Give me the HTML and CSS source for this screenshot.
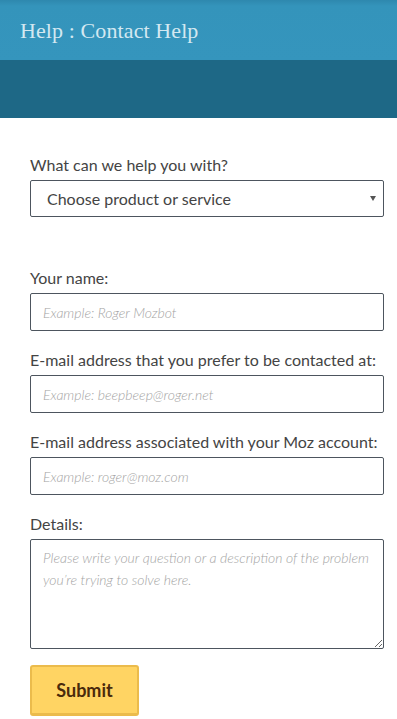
FILE: index.html
```html
<!DOCTYPE html>
<html lang="en">
<head>
<meta charset="utf-8">
<title>Help : Contact Help</title>
<link rel="stylesheet" href="styles.css">
</head>
<body>
<header class="header">
  <div class="header-top"><h1 class="title">Help : Contact Help</h1></div>
  <div class="header-band"></div>
</header>
<main class="content">
  <form class="form">
    <div class="field field-select">
      <label class="label" for="product">What can we help you with?</label>
      <div class="select-wrap">
        <select id="product" class="select">
          <option>Choose product or service</option>
        </select>
      </div>
    </div>
    <div class="field">
      <label class="label" for="name">Your name:</label>
      <input id="name" class="input" type="text" placeholder="Example: Roger Mozbot">
    </div>
    <div class="field">
      <label class="label" for="email">E-mail address that you prefer to be contacted at:</label>
      <input id="email" class="input" type="text" placeholder="Example: beepbeep@roger.net">
    </div>
    <div class="field">
      <label class="label" for="mozemail">E-mail address associated with your Moz account:</label>
      <input id="mozemail" class="input" type="text" placeholder="Example: roger@moz.com">
    </div>
    <div class="field field-last">
      <label class="label" for="details">Details:</label>
      <textarea id="details" class="textarea" placeholder="Please write your question or a description of the problem you’re trying to solve here."></textarea>
    </div>
    <button type="button" class="submit">Submit</button>
  </form>
</main>
</body>
</html>
```
FILE: styles.css
```css
* { box-sizing: border-box; }
html, body { margin: 0; padding: 0; background: #fff; }
body { font-family: Lato, "Open Sans", Arial, sans-serif; color: #444; }

.header-top {
  height: 60px;
  background: linear-gradient(#2e88ae 0, #3494bb 6px, #3595bd 100%);
  display: flex;
  align-items: center;
  padding: 0 20px;
}
.title {
  margin: 0;
  font-family: "Liberation Serif", "DejaVu Serif", serif;
  font-weight: normal;
  font-size: 22px;
  color: #d3e8f1;
  letter-spacing: 0.1px;
  position: relative;
  top: 1px;
}
.header-band { height: 58px; background: #1e6886; }

.content { padding: 36px 13px 0 30px; }
.form { display: flex; flex-direction: column; }

.field { display: flex; flex-direction: column; margin-bottom: 18px; }
.field-select { margin-bottom: 50px; }
.field-last { margin-bottom: 16px; }

.label {
  font-size: 16px;
  line-height: 22px;
  color: #444;
  margin-bottom: 4px;
}

.select-wrap { position: relative; }
.select-wrap::after {
  content: "";
  position: absolute;
  right: 8px;
  top: 16px;
  border-left: 3px solid transparent;
  border-right: 3px solid transparent;
  border-top: 5px solid #555;
}
.select {
  appearance: none;
  -webkit-appearance: none;
  width: 100%;
  height: 37px;
  border: 1px solid #4d555e;
  border-radius: 2px;
  background: #fff;
  font-family: Lato, sans-serif;
  font-size: 16px;
  color: #444;
  padding: 0 16px;
}

.input {
  width: 100%;
  height: 38px;
  border: 1px solid #4d555e;
  border-radius: 2px;
  padding: 0 12px;
  font-family: Lato, sans-serif;
  font-size: 14px;
  color: #444;
  background: #fff;
}
.input::placeholder, .textarea::placeholder {
  font-style: italic;
  font-weight: 300;
  color: #a4a4a4;
}
.textarea {
  width: 100%;
  height: 110px;
  border: 1px solid #4d555e;
  border-radius: 2px;
  padding: 7px 12px;
  font-family: Lato, sans-serif;
  font-size: 14px;
  line-height: 22px;
  color: #444;
  background: #fff;
  resize: vertical;
}

.submit {
  align-self: flex-start;
  width: 109px;
  height: 51px;
  background: #ffd463;
  border: 2px solid #ebbb4c;
  border-bottom-width: 3px;
  border-radius: 3px;
  font-family: Lato, sans-serif;
  font-weight: bold;
  font-size: 18px;
  color: #4a2a0c;
  padding: 0;
}
```
